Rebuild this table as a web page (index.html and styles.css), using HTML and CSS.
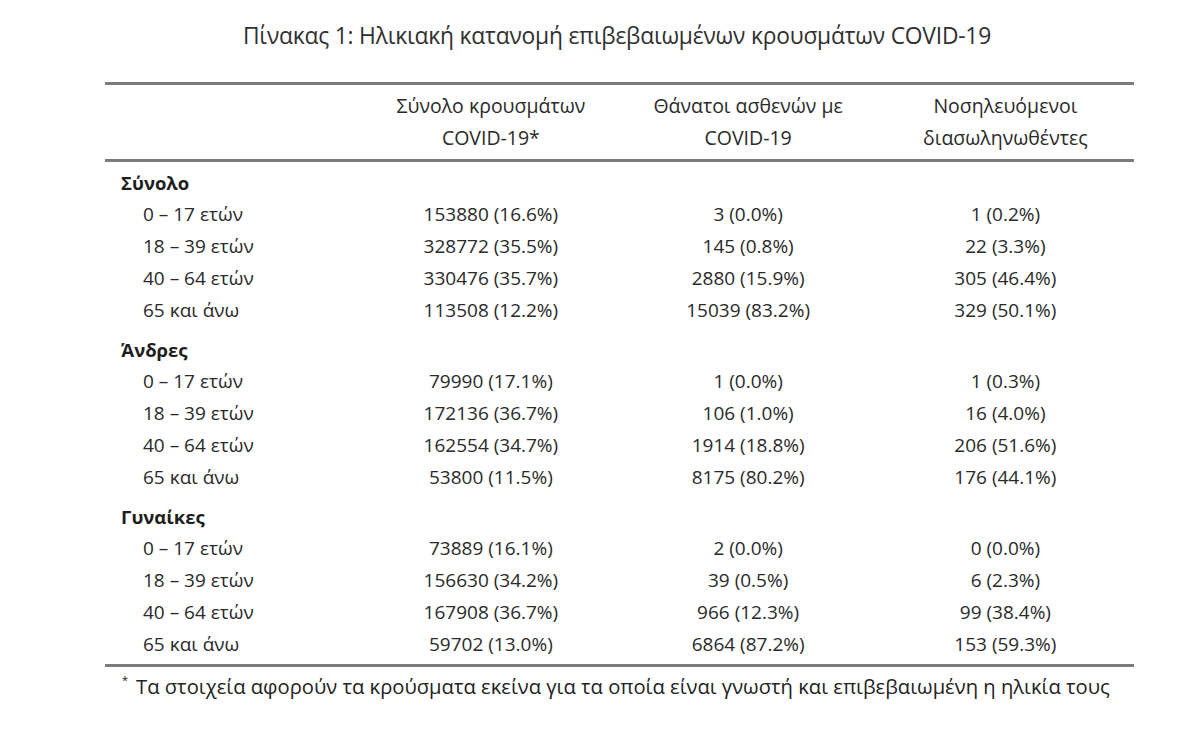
FILE: index.html
```html
<!DOCTYPE html>
<html lang="el">
<head>
<meta charset="utf-8">
<title>Πίνακας 1</title>
<link rel="stylesheet" href="styles.css">
</head>
<body>
<div class="page">
  <h1 class="title">Πίνακας 1: Ηλικιακή κατανομή επιβεβαιωμένων κρουσμάτων COVID-19</h1>
  <div class="table">
    <div class="head">
      <div class="cell"></div>
      <div class="cell hc">Σύνολο κρουσμάτων<br>COVID-19*</div>
      <div class="cell hc">Θάνατοι ασθενών με<br>COVID-19</div>
      <div class="cell hc">Νοσηλευόμενοι<br>διασωληνωθέντες</div>
    </div>
    <div class="body">
      <div class="group">
        <div class="ghead">Σύνολο</div>
        <div class="row"><div class="lab">0 – 17 ετών</div><div class="val">153880 (16.6%)</div><div class="val">3 (0.0%)</div><div class="val">1 (0.2%)</div></div>
        <div class="row"><div class="lab">18 – 39 ετών</div><div class="val">328772 (35.5%)</div><div class="val">145 (0.8%)</div><div class="val">22 (3.3%)</div></div>
        <div class="row"><div class="lab">40 – 64 ετών</div><div class="val">330476 (35.7%)</div><div class="val">2880 (15.9%)</div><div class="val">305 (46.4%)</div></div>
        <div class="row"><div class="lab">65 και άνω</div><div class="val">113508 (12.2%)</div><div class="val">15039 (83.2%)</div><div class="val">329 (50.1%)</div></div>
      </div>
      <div class="group">
        <div class="ghead">Άνδρες</div>
        <div class="row"><div class="lab">0 – 17 ετών</div><div class="val">79990 (17.1%)</div><div class="val">1 (0.0%)</div><div class="val">1 (0.3%)</div></div>
        <div class="row"><div class="lab">18 – 39 ετών</div><div class="val">172136 (36.7%)</div><div class="val">106 (1.0%)</div><div class="val">16 (4.0%)</div></div>
        <div class="row"><div class="lab">40 – 64 ετών</div><div class="val">162554 (34.7%)</div><div class="val">1914 (18.8%)</div><div class="val">206 (51.6%)</div></div>
        <div class="row"><div class="lab">65 και άνω</div><div class="val">53800 (11.5%)</div><div class="val">8175 (80.2%)</div><div class="val">176 (44.1%)</div></div>
      </div>
      <div class="group">
        <div class="ghead">Γυναίκες</div>
        <div class="row"><div class="lab">0 – 17 ετών</div><div class="val">73889 (16.1%)</div><div class="val">2 (0.0%)</div><div class="val">0 (0.0%)</div></div>
        <div class="row"><div class="lab">18 – 39 ετών</div><div class="val">156630 (34.2%)</div><div class="val">39 (0.5%)</div><div class="val">6 (2.3%)</div></div>
        <div class="row"><div class="lab">40 – 64 ετών</div><div class="val">167908 (36.7%)</div><div class="val">966 (12.3%)</div><div class="val">99 (38.4%)</div></div>
        <div class="row"><div class="lab">65 και άνω</div><div class="val">59702 (13.0%)</div><div class="val">6864 (87.2%)</div><div class="val">153 (59.3%)</div></div>
      </div>
    </div>
  </div>
  <p class="note"><sup class="ast">*</sup>Τα στοιχεία αφορούν τα κρούσματα εκείνα για τα οποία είναι γνωστή και επιβεβαιωμένη η ηλικία τους</p>
</div>
</body>
</html>
```

FILE: styles.css
```css
html, body {
  margin: 0;
  padding: 0;
  background: #ffffff;
}
body {
  font-family: "Open Sans", "Noto Sans", "DejaVu Sans", sans-serif;
  color: #2a2a2a;
}
.page {
  width: 1200px;
  height: 739px;
  overflow: hidden;
}
.title {
  margin: 22px 0 0 0;
  padding-left: 34px;
  font-size: 22.8px;
  line-height: 28px;
  font-weight: 400;
  text-align: center;
  color: #303030;
  letter-spacing: -0.2px;
}
.table {
  margin: 32px 0 0 105px;
  width: 1029px;
  border-top: 3px solid #7c7c7c;
  border-bottom: 3px solid #7c7c7c;
}
.head {
  display: grid;
  grid-template-columns: repeat(4, 1fr);
  padding: 5px 0;
  border-bottom: 3px solid #7c7c7c;
}
.hc {
  text-align: center;
  font-size: 19.5px;
  line-height: 32px;
}
.body {
  padding: 6px 0 4px 0;
}
.group + .group {
  margin-top: 9px;
}
.ghead {
  font-weight: 700;
  font-size: 18.5px;
  line-height: 30px;
  padding-left: 16px;
  color: #1e1e1e;
}
.row {
  display: grid;
  grid-template-columns: repeat(4, 1fr);
  font-size: 19px;
  line-height: 32px;
}
.lab {
  padding-left: 38px;
}
.val {
  text-align: center;
}
.note {
  margin: 7px 0 0 0;
  padding-left: 122px;
  font-size: 20.2px;
  line-height: 24px;
  color: #222222;
}
.ast {
  font-size: 11px;
  line-height: 0;
  vertical-align: 10px;
  margin-right: 8px;
}
```
